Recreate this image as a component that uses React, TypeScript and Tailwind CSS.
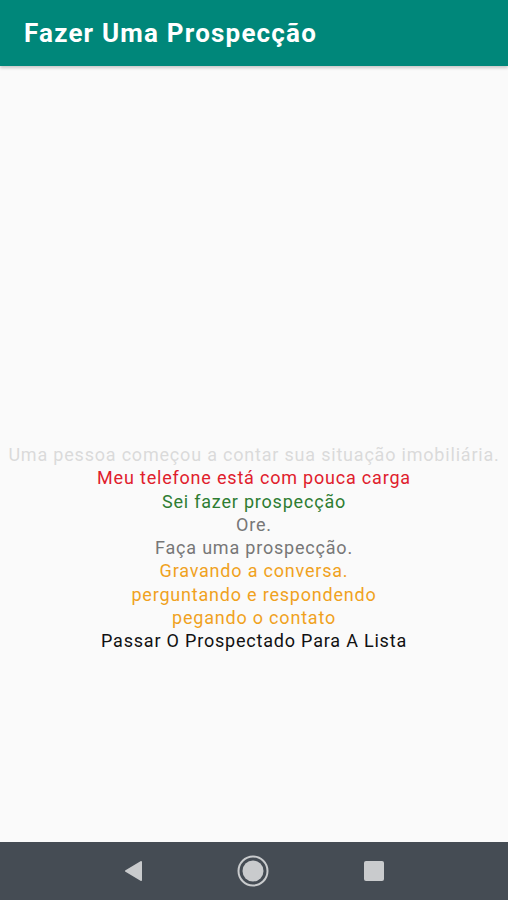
export default function App() {
  const lines: { text: string; color: string }[] = [
    { text: "Uma pessoa começou a contar sua situação imobiliária.", color: "text-[#dadada]" },
    { text: "Meu telefone está com pouca carga", color: "text-[#e0202c]" },
    { text: "Sei fazer prospecção", color: "text-[#2e7d32]" },
    { text: "Ore.", color: "text-[#777777]" },
    { text: "Faça uma prospecção.", color: "text-[#777777]" },
    { text: "Gravando a conversa.", color: "text-[#f0a21e]" },
    { text: "perguntando e respondendo", color: "text-[#f0a21e]" },
    { text: "pegando o contato", color: "text-[#f0a21e]" },
    { text: "Passar O Prospectado Para A Lista", color: "text-[#111111]" },
  ];

  return (
    <div className="flex h-[900px] w-[508px] flex-col bg-[#fafafa] font-['Roboto',sans-serif]">
      <header className="flex h-[66px] items-center bg-[#00877a] px-6 shadow-[0_2px_3px_rgba(0,0,0,0.2)]">
        <h1 className="text-[26px] font-bold tracking-[1.2px] text-white">Fazer Uma Prospecção</h1>
      </header>

      <main className="flex flex-1 flex-col items-center pt-[377px]">
        {lines.map((l) => (
          <p
            key={l.text}
            className={`whitespace-nowrap text-[18px] leading-[23.3px] tracking-[0.8px] ${l.color}`}
          >
            {l.text}
          </p>
        ))}
      </main>

      <nav className="flex h-[58px] items-center justify-center gap-[93px] bg-[#454c54]">
        <svg width="20" height="22" viewBox="0 0 20 22">
          <path d="M18 2 L3 11 L18 20 Z" fill="#c9cbcd" stroke="#c9cbcd" strokeWidth="2" strokeLinejoin="round" />
        </svg>
        <svg width="34" height="34" viewBox="0 0 34 34">
          <circle cx="17" cy="17" r="14.5" fill="none" stroke="#c9cbcd" strokeWidth="2" />
          <circle cx="17" cy="17" r="10.5" fill="#c9cbcd" />
        </svg>
        <svg width="22" height="22" viewBox="0 0 22 22">
          <rect x="1" y="1" width="20" height="20" rx="2" fill="#c9cbcd" />
        </svg>
      </nav>
    </div>
  );
}
